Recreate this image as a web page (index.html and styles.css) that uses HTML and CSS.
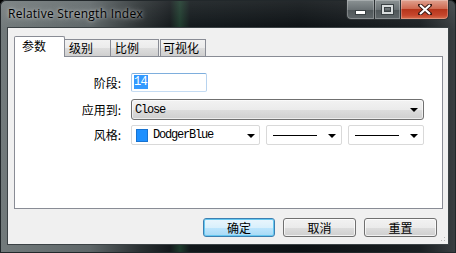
FILE: index.html
```html
<!DOCTYPE html>
<html>
<head>
<meta charset="utf-8">
<link rel="stylesheet" href="styles.css">
</head>
<body>
<div class="window">
  <div class="titlebar">
    <div class="title">Relative Strength Index</div>
    <div class="caption">
      <div class="cbtn cmin"><span class="minbar"></span></div>
      <div class="cbtn cmax"><span class="maxbox"></span></div>
      <div class="cbtn cclose">
        <svg width="14" height="11" viewBox="0 0 14 11"><path d="M2 1 L12 10 M12 1 L2 10" stroke="#3a1a14" stroke-width="4" stroke-linecap="square"/><path d="M2 1 L12 10 M12 1 L2 10" stroke="#fff" stroke-width="2.2"/></svg>
      </div>
    </div>
  </div>
  <div class="client">
    <div class="tabs">
      <div class="tab active">参数</div>
      <div class="tab">级别</div>
      <div class="tab">比例</div>
      <div class="tab">可视化</div>
    </div>
    <div class="panel">
      <div class="form">
        <div class="label">阶段:</div>
        <div class="ctl"><div class="input"><span class="sel">14</span></div></div>
        <div class="label">应用到:</div>
        <div class="ctl"><div class="combo"><span class="mono">Close</span><span class="arrow"></span></div></div>
        <div class="label">风格:</div>
        <div class="ctl styles">
          <div class="drop color"><span class="swatch"></span><span class="mono">DodgerBlue</span><span class="arrow"></span></div>
          <div class="drop line"><span class="ln"></span><span class="arrow"></span></div>
          <div class="drop line"><span class="ln"></span><span class="arrow"></span></div>
        </div>
      </div>
    </div>
    <div class="buttons">
      <div class="btn default">确定</div>
      <div class="btn">取消</div>
      <div class="btn">重置</div>
    </div>
    <div class="grip"></div>
  </div>
</div>
</body>
</html>
```
FILE: styles.css
```css
html, body {
  margin: 0;
  padding: 0;
  background: #000;
}
.window {
  width: 456px;
  height: 253px;
  box-sizing: border-box;
  padding: 0 7px 8px 7px;
  display: flex;
  flex-direction: column;
  background:
    linear-gradient(to bottom, rgba(255,255,255,0.10), rgba(255,255,255,0) 30px),
    linear-gradient(to right, #727a7b 0px, #5e6668 90px, #2a3032 140px, #14191c 170px, #1d3a2c 180px, #12181b 190px, #0c1114 300px, #1a1f22 420px, #3a3f42 456px);
  box-shadow: inset 0 0 0 1px #22282b;
  border-radius: 6px 6px 0 0;
  position: relative;
}
.titlebar {
  height: 27px;
  display: flex;
  align-items: flex-start;
  justify-content: space-between;
}
.title {
  margin-top: 5px;
  margin-left: 1px;
  font-family: "Open Sans", "Noto Sans", sans-serif;
  font-size: 12px;
  color: #000;
  text-shadow: 0 0 6px rgba(255,255,255,0.6), 0 0 3px rgba(255,255,255,0.5);
  letter-spacing: 0.25px;
}
.caption {
  display: flex;
  margin-right: 0;
}
.cbtn {
  height: 20px;
  box-sizing: border-box;
  border: 1px solid #2b3033;
  border-top: none;
  display: flex;
  align-items: center;
  justify-content: center;
  box-shadow: inset 0 0 0 1px rgba(255,255,255,0.25);
}
.cmin {
  width: 29px;
  border-radius: 0 0 0 5px;
  background: linear-gradient(to bottom, #8b9294, #6a7174 50%, #4f5659 51%, #5f6669);
}
.cmax {
  width: 26px;
  border-left: none;
  background: linear-gradient(to bottom, #8b9294, #6a7174 50%, #4f5659 51%, #5f6669);
}
.cclose {
  width: 48px;
  border-left: none;
  border-radius: 0 0 5px 0;
  background: linear-gradient(to bottom, #e0a290, #cf6a52 45%, #b6361c 50%, #c6462c 80%, #d6704f);
}
.minbar {
  width: 9px;
  height: 3px;
  background: #fff;
  margin-top: 5px;
  box-shadow: 0 0 0 1px #3a4144;
}
.maxbox {
  width: 7px;
  height: 5px;
  border: 2px solid #d8dcdd;
  box-shadow: 0 0 0 1px #3a4144, inset 0 0 0 1px #3a4144;
}
.client {
  flex: 1;
  background: #f0f0f0;
  border: 1px solid #3b4245;
  padding: 8px 6px 0 6px;
  display: flex;
  flex-direction: column;
  position: relative;
  font-family: "Noto Sans CJK SC", sans-serif;
  font-size: 12px;
  color: #000;
}
.tabs {
  display: flex;
  align-items: flex-end;
  height: 20px;
  position: relative;
  z-index: 1;
}
.tab {
  height: 17px;
  box-sizing: border-box;
  border: 1px solid #898c95;
  border-bottom: none;
  border-left: none;
  background: linear-gradient(to bottom, #f2f2f2, #ebebeb 50%, #dddddd 51%, #cfcfcf);
  padding: 0 0 0 4px;
  white-space: nowrap;
  line-height: 16px;
  font-size: 12px;
  width: 46px;
}
.tab:nth-child(3) { width: 48px; }
.tab:nth-child(4) { width: 46px; margin-left: 1px; border-left: 1px solid #898c95; padding-left: 2px; }
.tab.active {
  height: 21px;
  width: 51px;
  margin-bottom: -1px;
  background: #fff;
  border-left: 1px solid #898c95;
  border-right: 1px solid #898c95;
  line-height: 18px;
  padding-left: 7px;
  border-radius: 2px 2px 0 0;
}
.panel {
  width: 429px;
  height: 153px;
  box-sizing: border-box;
  background: #fff;
  border: 1px solid #898c95;
}
.form {
  display: grid;
  grid-template-columns: 106px 1fr;
  column-gap: 10px;
  row-gap: 0;
  padding-top: 16px;
  padding-right: 18px;
}
.label {
  text-align: right;
  line-height: 19px;
  height: 19px;
}
.label:nth-child(3) { margin-top: 7px; line-height: 21px; }
.label:nth-child(5) { margin-top: 5px; line-height: 19px; }
.input {
  width: 76px;
  height: 19px;
  box-sizing: border-box;
  border: 1px solid #abadb3;
  border-color: #7eaedd #b7d3ef #c5dcf3 #a6c6e8;
  border-radius: 2px;
  padding: 1px 0 0 2px;
  font-family: "Liberation Mono", monospace;
  font-size: 12px;
  line-height: 14px;
}
.sel {
  background: #3399ff;
  color: #fff;
  display: inline-block;
  letter-spacing: -0.8px;
  padding-right: 1px;
}
.combo {
  margin-top: 7px;
  height: 21px;
  box-sizing: border-box;
  border: 1px solid #707070;
  border-radius: 3px;
  background: linear-gradient(to bottom, #f2f2f2, #ebebeb 50%, #dddddd 51%, #cfcfcf);
  display: flex;
  align-items: center;
  justify-content: space-between;
  padding: 0 5px 0 3px;
  box-shadow: inset 0 0 0 1px rgba(255,255,255,0.6);
}
.mono {
  font-family: "Liberation Mono", monospace;
  font-size: 12px;
  letter-spacing: -1.2px;
  color: #000;
}
.arrow {
  width: 0;
  height: 0;
  border-left: 4px solid transparent;
  border-right: 4px solid transparent;
  border-top: 4px solid #000;
  margin-top: 1px;
}
.styles {
  display: flex;
  gap: 6px;
  margin-top: 5px;
}
.drop {
  height: 20px;
  box-sizing: border-box;
  border: 1px solid #d9d9d9;
  border-radius: 2px;
  background: #fff;
  display: flex;
  align-items: center;
}
.drop.color {
  width: 129px;
  padding: 0 4px 0 4px;
}
.swatch {
  width: 10px;
  height: 11px;
  background: #1e90ff;
  border: 1px solid #1873d0;
  margin-right: 5px;
}
.drop.color .mono { flex: 1; }
.drop.line {
  width: 76px;
  padding: 0 5px 0 6px;
  justify-content: space-between;
}
.ln {
  width: 44px;
  height: 1px;
  background: #000;
}
.buttons {
  display: flex;
  justify-content: flex-end;
  gap: 8px;
  padding-right: 5px;
  margin-top: 9px;
}
.btn {
  width: 73px;
  height: 19px;
  box-sizing: border-box;
  border: 1px solid #707070;
  border-radius: 3px;
  background: linear-gradient(to bottom, #f2f2f2, #ebebeb 50%, #dddddd 51%, #cfcfcf);
  box-shadow: inset 0 0 0 1px rgba(255,255,255,0.7);
  text-align: center;
  line-height: 17px;
  font-size: 12px;
}
.btn.default {
  width: 72px;
  border-color: #3c7fb1;
  background: linear-gradient(to bottom, #eaf6fd, #d9f0fc 50%, #bee6fd 51%, #a7d9f5);
  box-shadow: inset 0 0 0 1px #66c8f0;
}
.grip {
  position: absolute;
  right: 1px;
  bottom: 1px;
  width: 10px;
  height: 10px;
  background:
    radial-gradient(circle, #b8b8b8 0.8px, transparent 1px) 0 0 / 3px 3px;
  clip-path: polygon(100% 0, 100% 100%, 0 100%);
}
```
